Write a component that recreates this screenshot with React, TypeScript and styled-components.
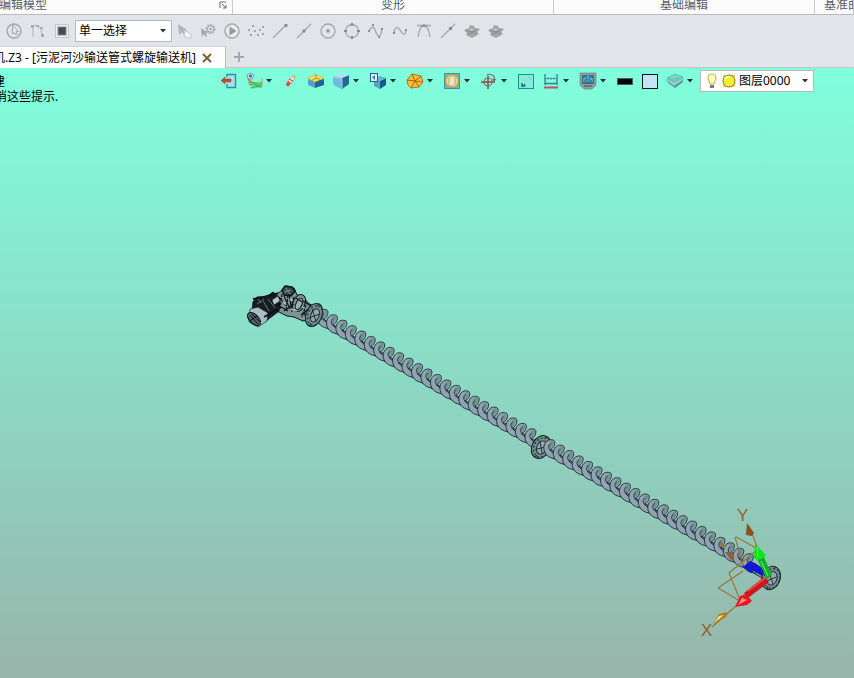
import React from "react";
import styled, { createGlobalStyle } from "styled-components";

const GlobalStyle = createGlobalStyle`
  * { box-sizing: border-box; }
  body {
    margin: 0;
    font-family: "Noto Sans", "Noto Sans CJK SC", sans-serif;
    font-size: 12px;
    line-height: 16px;
    color: #111;
  }
  button, select { font: inherit; color: inherit; }
`;

const Page = styled.div`
  display: flex;
  flex-direction: column;
  min-height: 100vh;
  overflow: hidden;
  background: #e1e4e8;
`;

const RibbonFooter = styled.header`
  display: grid;
  grid-template-columns: 233px 321px 261px 1fr;
  height: 15px;
  background: #fcfcfd;
  border-bottom: 1px solid #bfb9bc;
  overflow: hidden;
`;

const RibbonGroup = styled.div<{ $align?: string }>`
  display: flex;
  align-items: flex-end;
  justify-content: ${(p) => p.$align ?? "center"};
  padding-bottom: 1px;
  border-right: 1px solid #c9cbd0;
  color: #595d68;
  white-space: nowrap;
  overflow: hidden;
`;

const CutLabel = styled.span<{ $cut: number }>`
  margin-left: -${(p) => p.$cut}px;
`;

const LastLabel = styled.span`
  padding-left: 9px;
`;

const LauncherButton = styled.button`
  display: flex;
  margin: 0 5px 4px auto;
  padding: 0;
  border: 0;
  background: none;
`;

const SelectionBar = styled.div`
  display: flex;
  align-items: center;
  height: 31px;
  padding-left: 2px;
`;

const ToolButton = styled.button`
  display: flex;
  align-items: center;
  justify-content: center;
  flex: none;
  width: 24px;
  height: 24px;
  padding: 0;
  border: 0;
  background: none;
`;

const SelectBox = styled.div<{ $width: number }>`
  display: flex;
  align-items: center;
  flex: none;
  width: ${(p) => p.$width}px;
  height: 22px;
  padding: 0 5px 0 3px;
  border: 1px solid #b4bac0;
  background: #fff;
`;

const SelectionMode = styled(SelectBox)`
  margin-left: 1px;
`;

const PlainSelect = styled.select`
  appearance: none;
  flex: 1;
  min-width: 0;
  height: 18px;
  padding: 0;
  border: 0;
  background: transparent;
  color: #000;
  outline: none;
`;

const TabBar = styled.nav`
  display: flex;
  height: 22px;
  border-bottom: 1px solid #c6c4c6;
`;

const Tab = styled.div`
  display: flex;
  align-items: center;
  height: 22px;
  width: 226px;
  overflow: hidden;
  background: #fdfdfe;
  border-top: 1px solid #d0d2d6;
  border-right: 1px solid #b9bcc1;
  white-space: nowrap;
  color: #000;
`;

const TabLink = styled.a`
  flex: 1;
  margin-left: -7px;
  color: inherit;
  text-decoration: none;
`;

const CloseButton = styled(ToolButton)`
  width: 12px;
  height: 20px;
  margin-right: 12px;
`;

const NewTabButton = styled(ToolButton)`
  width: 26px;
  height: 22px;
`;

const Viewport = styled.main`
  position: relative;
  flex: 1;
  min-height: 610px;
  overflow: hidden;
  background: linear-gradient(#80ffdd, #98b5ab);
`;

const Scene = styled.svg`
  position: absolute;
  inset: 0;
  width: 100%;
  height: 100%;
`;

const Hint = styled.div`
  position: absolute;
  top: 6px;
  left: 0;
  line-height: 15px;
  white-space: nowrap;
  color: #000;
`;

const HintLine = styled.p<{ $cut: number }>`
  margin: 0 0 0 -${(p) => p.$cut}px;
`;

const ViewToolbar = styled.div`
  position: absolute;
  top: 2px;
  left: 217px;
  display: flex;
  align-items: center;
  height: 22px;
`;

const ViewButton = styled.button<{ $menu?: boolean }>`
  display: flex;
  align-items: center;
  flex: none;
  width: ${(p) => (p.$menu ? 37 : 25)}px;
  height: 22px;
  padding: 0 0 0 2px;
  gap: 2px;
  border: 0;
  background: none;
`;

const Caret = ({ color = "#16333b" }: { color?: string }) => (
  <svg width="6" height="4" viewBox="0 0 6 4" aria-hidden="true">
    <path d="M0 0H6L3 3.5Z" fill={color} />
  </svg>
);

const G = "#a4a7ab";
const D = "#8b8e92";

type Icon = { name: string; art: React.ReactNode; menu?: boolean };

const toolsBefore: Icon[] = [
  {
    name: "选择历史",
    art: (
      <>
        <circle cx="10" cy="10" r="7" fill="none" stroke={G} strokeWidth="1.4" />
        <path d="M8.500 4V13L10.500 11.500L12 14L13.500 13L12 10.500H14.500Z" fill="#e9eaec" stroke={G} />
      </>
    ),
  },
  {
    name: "链选择",
    art: (
      <>
        <path d="M5 16V5M5 5L8 4M9 5L13 7L14 15" fill="none" stroke="#bbbdc1" strokeWidth="1.3" />
        <path d="M3 4H6V7H3ZM8 4H11V6H8ZM13 13H16V16H13ZM12 6H15V8H12Z" fill="#a9acb0" />
      </>
    ),
  },
  {
    name: "实体过滤",
    art: (
      <>
        <rect x="3.500" y="3.500" width="13" height="13" fill="#eeeff1" stroke="#c4c6ca" />
        <rect x="6" y="6" width="8" height="8" fill="#4b4b4d" stroke="#88898c" />
      </>
    ),
  },
];

const surface = (
  <>
    <path d="M2 9L7 7L8 4L12 5L13 7L18 8L15 11L17 13L10 17L4 14L5 12Z" fill="#a3a5a8" />
    <path d="M4 9L10 11L17 8M5 13L10 12L15 12" fill="none" stroke="#8b8d90" />
    <path d="M6 8L12 8L10 10Z" fill="#c6c8cb" />
  </>
);

const toolsAfter: Icon[] = [
  {
    name: "拾取",
    art: (
      <>
        <path d="M4 3L5 14L8 11L11 15L12 14L10 10L13 9Z" fill="#b3b5b9" />
        <path d="M11 11L13 10L17 14V17H12L10 14Z" fill="#f3f3f4" stroke="#c2c4c8" />
      </>
    ),
  },
  {
    name: "拾取设置",
    art: (
      <>
        <path d="M3 7L4 16L6 13L8 16L9 15L8 12H10Z" fill={G} />
        <circle cx="12.500" cy="8" r="4" fill="none" stroke="#a8abaf" strokeWidth="2" strokeDasharray="2 1" />
        <circle cx="12.500" cy="8" r="3" fill="#e7e8ea" stroke={G} />
        <circle cx="12.500" cy="8" r="1" fill={D} />
      </>
    ),
  },
  {
    name: "播放",
    art: (
      <>
        <circle cx="10" cy="10" r="7" fill="#e9ebed" stroke={G} strokeWidth="1.4" />
        <path d="M7.500 5.500L14.500 10L7.500 14.500Z" fill="#97999d" />
      </>
    ),
  },
  {
    name: "点",
    art: (
      <path d="M6 4H8V6H6ZM2 8H4V10H2ZM8 9H10V11H8ZM13 8H15V10H13ZM16 5H18V7H16ZM4 13H6V15H4ZM11 13H13V15H11ZM16 12H18V14H16Z" fill={G} />
    ),
  },
  {
    name: "端点",
    art: (
      <>
        <path d="M3 17L16 4" stroke={G} strokeWidth="1.3" />
        <path d="M14.500 3H17.500V6H14.500Z" fill={D} />
      </>
    ),
  },
  {
    name: "中点",
    art: (
      <>
        <path d="M3 17L17 3" stroke={G} strokeWidth="1.3" />
        <path d="M8.500 8.500H11.500V11.500H8.500Z" fill={D} />
      </>
    ),
  },
  {
    name: "圆心",
    art: (
      <>
        <circle cx="10" cy="10" r="7" fill="none" stroke={G} strokeWidth="1.3" />
        <rect x="8.500" y="8.500" width="3" height="3" fill={D} />
      </>
    ),
  },
  {
    name: "象限点",
    art: (
      <>
        <circle cx="10" cy="10" r="6.500" fill="none" stroke={G} strokeWidth="1.3" />
        <path d="M9 2H11V5H9ZM9 15H11V18H9ZM2 9H5V11H2ZM15 9H18V11H15Z" fill={D} />
      </>
    ),
  },
  {
    name: "曲线点",
    art: (
      <>
        <path d="M3 11C5 5 8 5 9 9C11 15 13 17 15 13L16 8" fill="none" stroke={G} strokeWidth="1.3" />
        <path d="M6 3H8V5H6ZM2 9H4V11H2ZM12 15H14V17H12ZM15 7H17V9H15Z" fill={D} />
      </>
    ),
  },
  {
    name: "曲线",
    art: (
      <>
        <path d="M4 12C5 5 8 5 10 9S15 16 16 9" fill="none" stroke={G} strokeWidth="1.3" />
        <path d="M3 11H5V13H3ZM15 8H17V10H15Z" fill={D} />
      </>
    ),
  },
  {
    name: "切点",
    art: (
      <>
        <path d="M3 4.500H17M4 16C5 10 6 5 10 5S15 10 16 16" fill="none" stroke={G} strokeWidth="1.3" />
        <path d="M8.500 3.500H11.500V6H8.500Z" fill={D} />
      </>
    ),
  },
  {
    name: "线上点",
    art: (
      <>
        <path d="M3 17L17 3" stroke={G} strokeWidth="1.3" />
        <path d="M11 6H14V9H11Z" fill={D} />
      </>
    ),
  },
  { name: "曲面点", art: surface },
  { name: "面上点", art: surface },
];

const viewTools: Icon[] = [
  {
    name: "退出",
    art: (
      <>
        <path d="M8 6V3.500H16.500V16.500H8V13" fill="#a7e1e4" stroke="#2f8fa2" strokeWidth="1.4" />
        <path d="M2 9.500L6 6V8H12V11H6V13Z" fill="#b5523f" stroke="#8b443d" strokeWidth=".5" />
      </>
    ),
  },
  {
    name: "网格",
    menu: true,
    art: (
      <>
        <path d="M5 12L18 10V16L8 18Z" fill="#79e08c" />
        <path d="M4 12Q8 10 11 12T18 12M5 14Q9 12 12 14T18 14M7 17Q10 15 18 16" fill="none" stroke="#37ad5c" />
        <path d="M18 7V15" stroke="#d39c4c" />
        <path d="M3 4L7 2L10 4L8 8L4 8Z" fill="#cfe6f3" stroke="#4d90ab" strokeWidth=".8" />
        <circle cx="6.500" cy="5" r="1.500" fill="#2c6c93" />
        <path d="M4 8L8 12" stroke="#c9804b" strokeWidth="2" />
      </>
    ),
  },
  {
    name: "橡皮",
    art: (
      <>
        <path d="M7 10L11 5L14 7L10 13Z" fill="#efe6d8" stroke="#b08a78" strokeWidth=".6" />
        <path d="M7 10L10 12L8 15Q5 16 5 13Z" fill="#db4e45" />
        <path d="M12 5L16 4L13 8Z" fill="#e2b45a" />
        <path d="M8 8L12 10" stroke="#b0483f" />
      </>
    ),
  },
  {
    name: "基准面",
    art: (
      <>
        <path d="M2 8L9 10V17L2 14Z" fill="#52a1c9" />
        <path d="M9 10L18 8V14L9 17Z" fill="#1f6591" />
        <path d="M2 7L10 4L18 7L9 11Z" fill="#fbe64d" stroke="#d0a63c" strokeWidth=".6" />
        <path d="M10 8V3M6 9L10 7.500L14 8" fill="none" stroke="#a87a38" strokeWidth=".8" />
      </>
    ),
  },
  {
    name: "着色",
    menu: true,
    art: (
      <>
        <path d="M2 6Q2 4 4 5L11 7V18L4 15Q2 14 2 12Z" fill="#72b7df" />
        <path d="M11 7L18 4V13L11 18Z" fill="#246794" />
        <path d="M2 5L9 2L18 4L11 7Z" fill="#b5e0ea" />
        <path d="M2 6L11 8V17" fill="none" stroke="#a5d3e7" />
      </>
    ),
  },
  {
    name: "视图方向",
    menu: true,
    art: (
      <>
        <path d="M6 8L12 10V18L6 15Z" fill="#54a2c6" />
        <path d="M12 10L18 7V14L12 18Z" fill="#155b86" />
        <path d="M6 8L12 5L18 7L12 10Z" fill="#5eb8cb" />
        <rect x="2.500" y="2.500" width="7" height="8" fill="#e1effb" stroke="#24588e" />
        <path d="M7 4V9L4 6.500Z" fill="#3e7cb6" />
      </>
    ),
  },
  {
    name: "线框",
    menu: true,
    art: (
      <>
        <path d="M2 9L7 3L16 5L18 11L14 16L6 17L3 14Z" fill="#f8bf34" stroke="#b37420" />
        <path d="M7 3L10 10L14 16M2 9L10 10L16 5M6 17L10 10L18 11" fill="none" stroke="#a9601c" />
      </>
    ),
  },
  {
    name: "剖面",
    menu: true,
    art: (
      <>
        <rect x="2.500" y="2.500" width="15" height="15" fill="#78b3bd" stroke="#4890a0" />
        <circle cx="10" cy="10" r="6.500" fill="#efd75c" stroke="#c1944c" />
        <path d="M7 7L9 5H13V13L11 15H7Z" fill="#e3e6d5" stroke="#b8a278" strokeWidth=".8" />
      </>
    ),
  },
  {
    name: "旋转中心",
    menu: true,
    art: (
      <>
        <circle cx="9" cy="11" r="4" fill="none" stroke="#7e7673" strokeWidth="1.2" />
        <path d="M2 11H16M9 5V18" stroke="#98474c" strokeWidth="1.5" />
        <path d="M8 4C13 2 17 6 15 10" fill="none" stroke="#5f8880" strokeWidth="1.4" />
        <path d="M13 8H17L15 11Z" fill="#98575a" />
      </>
    ),
  },
  {
    name: "缩放窗口",
    art: (
      <>
        <rect x="2.500" y="3.500" width="15" height="14" fill="#82edda" stroke="#298b92" />
        <path d="M6 12V15H8.500V13" fill="none" stroke="#245e77" strokeWidth="1.4" />
        <path d="M12 6H15V9" fill="none" stroke="#72d3c6" />
      </>
    ),
  },
  {
    name: "测量",
    menu: true,
    art: (
      <>
        <path d="M4 3V14M16 3V14M4 12.500H16" fill="none" stroke="#337c8e" strokeWidth="1.3" />
        <path d="M4 7.500H16M7 6V9M10 6V9M13 6V9" fill="none" stroke="#4aa0aa" />
        <path d="M3 16.500H17" stroke="#b5545b" strokeWidth="2" />
      </>
    ),
  },
  {
    name: "显示",
    menu: true,
    art: (
      <>
        <path d="M2 2H18V14L14 18H6L2 14Z" fill="#8f9c9f" stroke="#78898d" strokeWidth=".8" />
        <rect x="4" y="4" width="12" height="9" fill="#3a7187" />
        <path d="M5 11V8L7 6L9 7V4.500H11V7L13 6L15 8V11Z" fill="#52b0d2" />
        <path d="M6 11L8 8M9 11V7M12 11L11 7M14 11L13 9" fill="none" stroke="#1c5a7c" strokeWidth=".8" />
        <path d="M6 14H14V16H6Z" fill="#68777b" />
      </>
    ),
  },
  { name: "线条颜色", art: <rect x="2.500" y="7.500" width="15" height="6" fill="#000" stroke="#45605d" /> },
  { name: "背景颜色", art: <rect x="2.500" y="3.500" width="15" height="14" fill="#c3e4f5" stroke="#101719" /> },
  {
    name: "图层管理",
    menu: true,
    art: (
      <>
        <path d="M2 9L9 14L18 9V11L10 17L3 12Z" fill="#4a98a0" />
        <path d="M2 8L9 12L18 7V9L9 15L2 10Z" fill="#a9cdd0" stroke="#58a3a8" strokeWidth=".5" />
        <path d="M2 7L10 3L18 6L9 11Z" fill="#6ccbbf" stroke="#4fb0ab" strokeWidth=".7" />
        <path d="M5 7L11 5L14 6" stroke="#9adfcf" fill="none" />
      </>
    ),
  },
];

const Art = ({ children }: { children: React.ReactNode }) => (
  <svg width="20" height="20" viewBox="0 0 20 20" aria-hidden="true">
    {children}
  </svg>
);

const FIRST = { x: 322, y: 314.5 };
const STEP = { x: 9.45, y: 5.43 };
const coils = Array.from({ length: 46 }, (_, i) => ({
  x: FIRST.x + i * STEP.x,
  y: FIRST.y + i * STEP.y,
}));

const Coil = ({ x, y }: { x: number; y: number }) => (
  <g transform={`translate(${x} ${y})`} strokeLinejoin="round">
    <path
      d="M3 -5C-1 -6 -5 -2 -5 3C-5 9 0 14 8 14L12 12L9 9C6 9 3 8 1 5C4 4 6 1 6 -2C6 -4 5 -5 3 -5Z"
      fill="#91a2b1"
      stroke="#1a2e36"
      strokeWidth=".9"
    />
    <path d="M3 -4C6 -4 5 1 1 4C-1 2 -1 -2 3 -4Z" fill="#72908d" />
    <path d="M1 5C-1 2 0 0 2 -1" fill="none" stroke="#22363f" strokeWidth=".9" />
    <path d="M4 7L8 8" stroke="#22363f" strokeWidth=".8" />
  </g>
);

const Flange = ({ x, y, rx, ry, angle }: { x: number; y: number; rx: number; ry: number; angle: number }) => (
  <g transform={`translate(${x} ${y}) rotate(${angle})`} stroke="#17252b">
    <ellipse rx={rx} ry={ry} fill="#6f918a" strokeWidth="1.1" />
    <ellipse cx="1" rx={rx - 1} ry={ry - 2} fill="none" stroke="#26383d" strokeWidth="1.3" strokeDasharray="2 2" />
    <ellipse cx="1" rx={rx - 4} ry={ry - 5} fill="#93a6b2" strokeWidth=".9" />
    <path d={`M-4 -5L4 5M5 -3L-4 5M0 ${-ry}V${3 - ry}M0 ${ry - 3}V${ry}`} fill="none" strokeWidth=".8" />
  </g>
);

const Motor = () => (
  <g stroke="#0b1115" strokeLinejoin="round">
    <path d="M273 297L281 291L287 286L294 288L297 295L303 296L308 303L313 306L310 320L303 321L294 317L287 316L277 311Z" fill="#7d9394" strokeWidth="1" />
    <path d="M253 302L257 297L262 297L269 295L273 292L280 298L279 311L266 321L252 315Z" fill="#171d22" />
    <path d="M250 309L258 307L268 313L267 321L258 327L249 322Z" fill="#a9bdc5" strokeWidth=".6" />
    <ellipse cx="254" cy="319" rx="4.500" ry="8" transform="rotate(-45 254 319)" fill="#53656b" />
    <path d="M250 315L258 324M252 314L260 322M250 321L257 316" strokeWidth="1" />
    <path d="M263 301L269 311M268 299L275 308M257 304L264 299M258 299L261 303" fill="none" stroke="#75908f" strokeWidth=".8" />
    <path d="M253 299L263 297M268 296L278 293M264 317L278 309" fill="none" strokeWidth="1.8" />
    <path d="M272 300L278 296L280 301L274 305Z" fill="#b6c4cc" strokeWidth=".5" />
    <path d="M282 290L285 286L292 287L295 291L291 296L284 295Z" fill="#384a4f" strokeWidth="1.3" />
    <path d="M284 292L291 290M286 288L290 294" stroke="#92a5aa" strokeWidth=".8" />
    <ellipse cx="299" cy="303" rx="6" ry="9" transform="rotate(25 299 303)" fill="#7d9394" strokeWidth="1" />
    <ellipse cx="299" cy="304" rx="3" ry="6" transform="rotate(25 299 304)" fill="#9db0b9" strokeWidth="1" />
    <path d="M280 298L286 306M284 296L290 309M289 294L292 312M276 304L288 311M284 311L294 304M301 315L311 307M304 312L307 320M296 298L302 302M303 301L311 306" fill="none" strokeWidth="1.1" />
    <path d="M283 302L287 305M290 299L293 301M291 309L297 311M302 307L306 308" stroke="#adbdc4" strokeWidth="1.8" />
    <path d="M282 294L280 309M288 295L286 311M294 297L291 307M306 305L302 317" strokeWidth="1.2" strokeDasharray="3 1" />
  </g>
);

const AxisTriad = () => (
  <g>
    <path d="M769 577L749 526M769 577L712 627M736 537L758 549M735 537L743 565M757 550L729 573L740 600M718 588L740 601M718 588L743 571" fill="none" stroke="#95743b" strokeWidth="1.1" />
    <path d="M747 523L754 533L752 536L746 535Z" fill="#8a521d" />
    <path d="M725 552L733 552L734 561L730 559Z" fill="#89613b" />
    <path d="M720 543L725 547" stroke="#a46c24" strokeWidth="2" />
    <path d="M743 567L750 561L755 563L765 570L762 576L754 571L751 573Z" fill="#1118d0" />
    <path d="M760 556L763 555L772 575L767 579L757 559Z" fill="#15ae28" />
    <path d="M755 544L765 554L765 557L758 560L754 558Z" fill="#0be51d" />
    <path d="M757 547L758 557M761 561L768 576" fill="none" stroke="#66fb70" />
    <path d="M764 577L744 593L748 598L769 582Z" fill="#cd191c" />
    <path d="M735 607L740 596L746 594L752 601L747 605Z" fill="#e71922" />
    <path d="M738 605L742 598L747 600Z" fill="#ff8e92" />
    <path d="M765 578L748 591" stroke="#f15357" strokeWidth="1.5" />
    <path d="M713 624L719 614L727 612L726 617Z" fill="#b47d17" />
    <path d="M714 623L719 616L724 615Z" fill="#ffe6a1" />
    <g fill="#946126" fontFamily="Liberation Sans, sans-serif" fontSize="17">
      <text x="737" y="521">Y</text>
      <text x="701" y="636">X</text>
    </g>
  </g>
);

export default function App() {
  return (
    <Page>
      <GlobalStyle />
      <RibbonFooter>
        <RibbonGroup $align="flex-start">
          <CutLabel $cut={1}>编辑模型</CutLabel>
          <LauncherButton aria-label="对话框">
            <svg width="8" height="8" viewBox="0 0 8 8" fill="none" stroke="#686c74">
              <path d="M1 7V1H7M3 3L7 7M7 4V7H4" />
            </svg>
          </LauncherButton>
        </RibbonGroup>
        <RibbonGroup>变形</RibbonGroup>
        <RibbonGroup>基础编辑</RibbonGroup>
        <RibbonGroup $align="flex-start">
          <LastLabel>基准曲面</LastLabel>
        </RibbonGroup>
      </RibbonFooter>

      <SelectionBar>
        {toolsBefore.map((t) => (
          <ToolButton key={t.name} aria-label={t.name}>
            <Art>{t.art}</Art>
          </ToolButton>
        ))}
        <SelectionMode $width={97}>
          <PlainSelect aria-label="选择方式">
            <option>单一选择</option>
          </PlainSelect>
          <Caret color="#333" />
        </SelectionMode>
        {toolsAfter.map((t) => (
          <ToolButton key={t.name} aria-label={t.name}>
            <Art>{t.art}</Art>
          </ToolButton>
        ))}
      </SelectionBar>

      <TabBar>
        <Tab>
          <TabLink href="#model">机.Z3 - [污泥河沙输送管式螺旋输送机]</TabLink>
          <CloseButton aria-label="关闭">
            <svg width="10" height="10" viewBox="0 0 10 10">
              <path d="M1 1L9 9M9 1L1 9" stroke="#78603b" strokeWidth="2" />
            </svg>
          </CloseButton>
        </Tab>
        <NewTabButton aria-label="新建标签">
          <svg width="12" height="12" viewBox="0 0 12 12">
            <path d="M6 1V11M1 6H11" stroke="#a3a6aa" strokeWidth="2" />
          </svg>
        </NewTabButton>
      </TabBar>

      <Viewport>
        <Scene viewBox="0 68 854 610" role="img" aria-label="螺旋输送机模型">
          <path d="M312 316L770 579" stroke="#1d3037" strokeWidth="7" />
          <path d="M312 316L770 579" stroke="#8b9ca8" strokeWidth="5" />
          {coils.slice(0, 23).map((c) => (
            <Coil key={c.x} x={c.x} y={c.y} />
          ))}
          <Flange x={541} y={447} rx={9} ry={12} angle={28} />
          {coils.slice(24).map((c) => (
            <Coil key={c.x} x={c.x} y={c.y} />
          ))}
          <Motor />
          <Flange x={314} y={315} rx={8} ry={12} angle={22} />
          <Flange x={771} y={578} rx={9} ry={12} angle={20} />
          <AxisTriad />
        </Scene>
        <Hint>
          <HintLine $cut={7}>建</HintLine>
          <HintLine $cut={5}>消这些提示.</HintLine>
        </Hint>
        <ViewToolbar>
          {viewTools.map((t) => (
            <ViewButton key={t.name} $menu={t.menu} aria-label={t.name}>
              <Art>{t.art}</Art>
              {t.menu && <Caret />}
            </ViewButton>
          ))}
          <SelectBox $width={114}>
            <svg width="35" height="20" viewBox="0 0 35 20" aria-hidden="true">
              <path d="M6 13C6 10 4 10 4 7A4 4 0 0 1 12 7C12 10 10 10 10 13Z" fill="#fffbd0" stroke="#d4b53d" strokeWidth="1.2" />
              <path d="M6 14H10V17H6Z" fill="#777b86" />
              <path d="M19 4H31V16H19Z" fill="#dddc4b" />
              <circle cx="25" cy="10" r="6" fill="#f4ed30" stroke="#777d36" />
              <path d="M21 8Q23 5 26 6" fill="none" stroke="#fffac2" strokeWidth="2" />
            </svg>
            <PlainSelect aria-label="图层">
              <option>图层0000</option>
            </PlainSelect>
            <Caret color="#333" />
          </SelectBox>
        </ViewToolbar>
      </Viewport>
    </Page>
  );
}
